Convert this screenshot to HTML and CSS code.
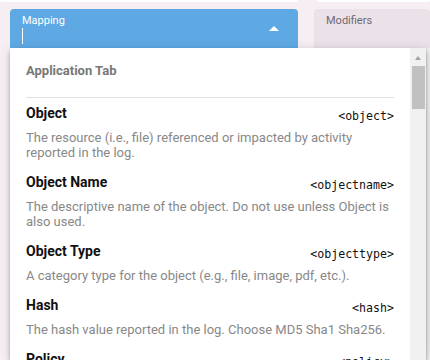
FILE: index.html
```html
<!DOCTYPE html>
<html>
<head>
<meta charset="utf-8">
<link rel="stylesheet" href="styles.css">
</head>
<body>
<div class="top-strip">
  <div class="strip-card strip-a"></div>
  <div class="strip-card strip-b"></div>
</div>
<div class="fields">
  <div class="field field-mapping">
    <div class="field-label">Mapping</div>
    <div class="field-input"><span class="caret"></span></div>
    <span class="arrow-up"></span>
  </div>
  <div class="field field-modifiers">
    <div class="field-label">Modifiers</div>
  </div>
</div>
<div class="backdrop-edge"></div>

<div class="panel">
  <div class="panel-content">
    <div class="group-title">Application Tab</div>
    <div class="separator"></div>
    <div class="option">
      <div class="option-head"><span class="option-name">Object</span><code class="option-tag">&lt;object&gt;</code></div>
      <div class="option-desc">The resource (i.e., file) referenced or impacted by activity reported in the log.</div>
    </div>
    <div class="option">
      <div class="option-head"><span class="option-name">Object Name</span><code class="option-tag">&lt;objectname&gt;</code></div>
      <div class="option-desc">The descriptive name of the object. Do not use unless Object is also used.</div>
    </div>
    <div class="option">
      <div class="option-head"><span class="option-name">Object Type</span><code class="option-tag">&lt;objecttype&gt;</code></div>
      <div class="option-desc">A category type for the object (e.g., file, image, pdf, etc.).</div>
    </div>
    <div class="option">
      <div class="option-head"><span class="option-name">Hash</span><code class="option-tag">&lt;hash&gt;</code></div>
      <div class="option-desc">The hash value reported in the log. Choose MD5 Sha1 Sha256.</div>
    </div>
    <div class="option">
      <div class="option-head"><span class="option-name">Policy</span><code class="option-tag">&lt;policy&gt;</code></div>
      <div class="option-desc">The policy reported in the log.</div>
    </div>
  </div>
  <div class="scrollbar">
    <span class="scroll-arrow"></span>
    <span class="scroll-thumb"></span>
  </div>
</div>
</body>
</html>
```
FILE: styles.css
```css
html, body {
  margin: 0;
  padding: 0;
}
body {
  width: 430px;
  height: 360px;
  overflow: hidden;
  background: #f6eef3;
  font-family: Roboto, "Noto Sans", Arial, sans-serif;
  position: relative;
}
.top-strip {
  display: flex;
  gap: 19px;
  height: 2px;
}
.strip-card {
  background: #ffffff;
  border-radius: 0 0 3px 3px;
}
.strip-a { width: 298px; }
.strip-b { flex: 1; }
.fields {
  display: flex;
  gap: 16px;
  padding: 7px 0 0 10px;
}
.field {
  position: relative;
  height: 39px;
  border-radius: 4px 4px 0 0;
  box-sizing: border-box;
  padding: 5px 12px 0;
}
.field-mapping {
  width: 288px;
  background: #5ea9e4;
  color: #ffffff;
}
.field-modifiers {
  flex: 1;
  background: #ebe1e8;
  color: #6f6a74;
}
.field-label {
  font-size: 11px;
  line-height: 13px;
}
.field-input {
  height: 20px;
  padding-top: 1px;
}
.caret {
  display: block;
  width: 1px;
  height: 16px;
  background: #ffffff;
}
.arrow-up {
  position: absolute;
  left: 259px;
  top: 17px;
  width: 0;
  height: 0;
  border-left: 5px solid transparent;
  border-right: 5px solid transparent;
  border-bottom: 5px solid #ffffff;
}
.backdrop-edge {
  position: absolute;
  left: 426px;
  top: 48px;
  width: 4px;
  bottom: 0;
  background: #eeeeee;
  border-left: 1px solid #e2e2e2;
  box-sizing: border-box;
}
.panel {
  position: absolute;
  left: 10px;
  top: 48px;
  width: 416px;
  height: 312px;
  overflow: hidden;
  background: #ffffff;
  display: flex;
  box-shadow: 0 2px 4px -1px rgba(0,0,0,.2), 0 4px 5px 0 rgba(0,0,0,.14), 0 1px 10px 0 rgba(0,0,0,.12);
}
.panel-content {
  flex: 1;
  padding: 15px 16px 0 16px;
}
.group-title {
  font-size: 13px;
  line-height: 16px;
  font-weight: 700;
  color: #777777;
}
.separator {
  height: 1px;
  background: #e0e0e0;
  margin: 18px 0 7px;
}
.option {
  margin-bottom: 14px;
}
.option-head {
  display: flex;
  justify-content: space-between;
  align-items: flex-start;
}
.option-name {
  font-size: 14px;
  line-height: 17px;
  font-weight: 700;
  color: #111111;
}
.option-tag {
  font-family: "DejaVu Sans Mono", "Liberation Mono", monospace;
  font-size: 11.6px;
  line-height: 17px;
  padding-top: 3px;
  color: #111111;
}
.option-desc {
  margin-top: 5px;
  font-size: 13px;
  line-height: 15px;
  color: #888888;
}
.scrollbar {
  width: 16px;
  background: #f1f1f1;
  position: relative;
}
.scroll-arrow {
  position: absolute;
  left: 5px;
  top: 8px;
  width: 0;
  height: 0;
  border-left: 3.5px solid transparent;
  border-right: 3.5px solid transparent;
  border-bottom: 4px solid #a3a3a3;
}
.scroll-thumb {
  position: absolute;
  left: 2px;
  right: 1px;
  top: 18px;
  height: 43px;
  background: #c1c1c1;
}
```
